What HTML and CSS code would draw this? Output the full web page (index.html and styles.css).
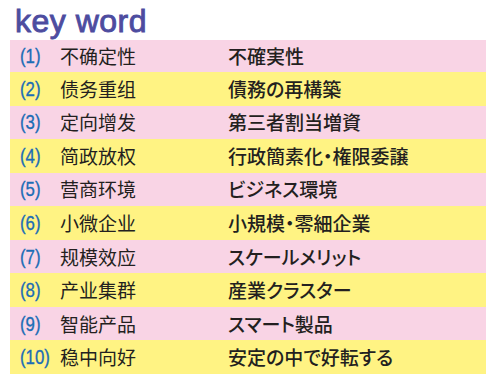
FILE: index.html
```html
<!DOCTYPE html>
<html lang="ja">
<head>
<meta charset="utf-8">
<link rel="stylesheet" href="styles.css">
</head>
<body>
<div class="title">key word</div>
<div class="table">
  <div class="row pink first"><span class="num">(1)</span><span class="cn" lang="zh-CN">不确定性</span><span class="jp">不確実性</span></div>
  <div class="row yellow"><span class="num">(2)</span><span class="cn" lang="zh-CN">债务重组</span><span class="jp">債務の再構築</span></div>
  <div class="row pink"><span class="num">(3)</span><span class="cn" lang="zh-CN">定向增发</span><span class="jp">第三者割当増資</span></div>
  <div class="row yellow"><span class="num">(4)</span><span class="cn" lang="zh-CN">简政放权</span><span class="jp">行政簡素化・権限委譲</span></div>
  <div class="row pink"><span class="num">(5)</span><span class="cn" lang="zh-CN">营商环境</span><span class="jp">ビジネス環境</span></div>
  <div class="row yellow"><span class="num">(6)</span><span class="cn" lang="zh-CN">小微企业</span><span class="jp">小規模・零細企業</span></div>
  <div class="row pink"><span class="num">(7)</span><span class="cn" lang="zh-CN">规模效应</span><span class="jp">スケールメリット</span></div>
  <div class="row yellow"><span class="num">(8)</span><span class="cn" lang="zh-CN">产业集群</span><span class="jp">産業クラスター</span></div>
  <div class="row pink"><span class="num">(9)</span><span class="cn" lang="zh-CN">智能产品</span><span class="jp">スマート製品</span></div>
  <div class="row yellow"><span class="num">(10)</span><span class="cn" lang="zh-CN">稳中向好</span><span class="jp">安定の中で好転する</span></div>
</div>
</body>
</html>
```
FILE: styles.css
```css
html, body {
  margin: 0;
  padding: 0;
  background: #ffffff;
}
.title {
  height: 40px;
  box-sizing: border-box;
  padding: 3px 0 0 15px;
  font-family: "Liberation Sans", Arial, sans-serif;
  font-size: 32px;
  line-height: 36px;
  letter-spacing: 0.5px;
  color: #4d4c9f;
  -webkit-text-stroke: 0.9px #4d4c9f;
}
.table {
  margin-left: 10px;
  width: 476px;
  display: flex;
  flex-direction: column;
}
.row {
  height: 33.55px;
  display: grid;
  grid-template-columns: 40px 168px 1fr;
  align-items: center;
  padding-left: 10px;
  box-sizing: border-box;
}
.row.first {
  height: 32px;
}
.pink {
  background: #f9d4e5;
}
.yellow {
  background: #fff383;
}
.num {
  justify-self: start;
  display: inline-block;
  font-family: "Liberation Sans", Arial, sans-serif;
  font-size: 21px;
  line-height: 24px;
  color: #1c6db6;
  -webkit-text-stroke: 0.35px #1c6db6;
  transform: scaleX(0.8);
  transform-origin: left center;
}
.cn {
  font-family: "Noto Sans CJK SC", sans-serif;
  font-size: 19px;
  color: #231f20;
  line-height: 24px;
}
.jp {
  font-family: "Noto Sans CJK JP", sans-serif;
  font-size: 19px;
  font-weight: 500;
  color: #231f20;
  line-height: 24px;
  font-feature-settings: "palt";
}
```
